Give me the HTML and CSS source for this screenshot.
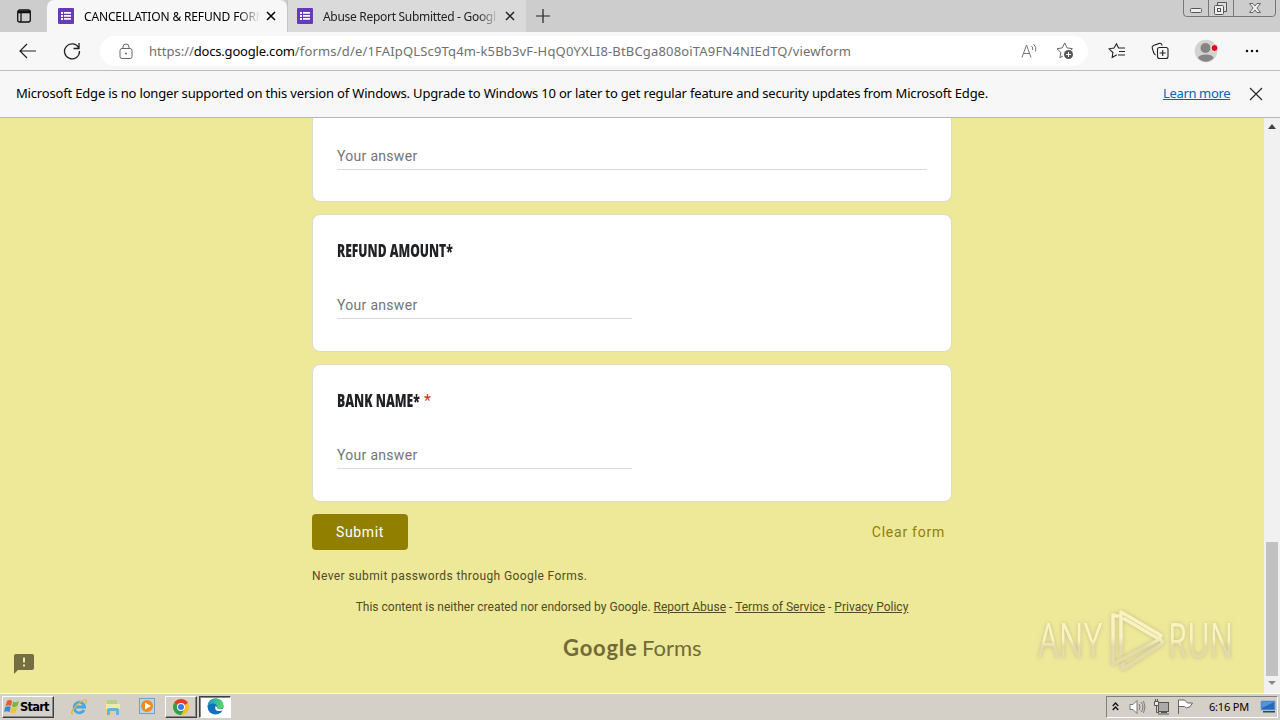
FILE: index.html
```html
<!DOCTYPE html>
<html lang="en">
<head>
<meta charset="utf-8">
<title>CANCELLATION &amp; REFUND FORM</title>
<link rel="stylesheet" href="styles.css">
</head>
<body>
<svg width="0" height="0" class="defs">
  <symbol id="forms" viewBox="0 0 16 16"><rect width="16" height="16" rx="1" fill="#673ab7"/><path d="M3 4h2v2H3zM3 7h2v2H3zM3 10h2v2H3zM6 4h7v1.7H6zM6 7h7v1.7H6zM6 10h7v1.7H6z" fill="#fff"/></symbol>
  <symbol id="cross" viewBox="0 0 10 10"><path d="M1 1l8 8M9 1L1 9" fill="none" stroke="currentColor"/></symbol>
</svg>
<div class="screen">
  <header class="tabs">
    <div class="tab-menu"><svg width="16" height="16" viewBox="0 0 16 16" fill="none" stroke="#111" stroke-width="1.3"><rect x="1.7" y="2" width="12.6" height="12" rx="2"/><path d="M2 4h12" stroke-width="2.6"/><path d="M5 5v9"/></svg></div>
    <div class="tab active"><svg class="fav"><use href="#forms"/></svg><span class="tab-title t1">CANCELLATION &amp; REFUND FORM</span><svg class="tab-x"><use href="#cross"/></svg></div>
    <div class="tab second"><svg class="fav"><use href="#forms"/></svg><span class="tab-title t2">Abuse Report Submitted - Googl</span><svg class="tab-x"><use href="#cross"/></svg></div>
    <svg class="plus" width="16" height="16" viewBox="0 0 16 16"><path d="M8 1v14M1 8h14" stroke="#222" stroke-width="1.2"/></svg>
    <svg class="winctl" width="94" height="18" viewBox="0 0 94 18" fill="none" stroke="#777"><path d="M.5 0v13q0 3.500 3 3.500h86q3 0 3-3.500V0M25.500 0v16M50.500 0v16"/><rect x="7.500" y="8.500" width="11" height="4" rx="1" fill="#eee" stroke="#555"/><path d="M34.500 5V2.500h9v9H41" fill="#ddd" stroke="#555"/><rect x="31.500" y="5.500" width="9" height="9" rx="1" fill="#eee" stroke="#555"/><rect x="34.500" y="8.500" width="3" height="3" stroke="#555"/><path d="M66.500 3.500h3.500l2 2.500 2-2.500h3.500l-3.500 4.500 3.500 4.500h-3.500l-2-2.500-2 2.500h-3.500l3.500-4.500z" fill="#eee" stroke="#666"/></svg>
  </header>
  <div class="toolbar">
    <svg class="back" width="18" height="16" viewBox="0 0 18 16" fill="none" stroke="#222" stroke-width="1.2"><path d="M17 8H1.500M8 1L1 8l7 7"/></svg>
    <svg class="reload" width="18" height="18" viewBox="0 0 18 18" fill="none" stroke="#222" stroke-width="1.300"><path d="M15.800 6.200A7.500 7.500 0 1 0 16.500 9M16 1v5.500h-5.500"/></svg>
    <div class="address">
      <svg class="lock" width="14" height="17" viewBox="0 0 14 17" fill="none" stroke="#666"><rect x="1" y="5.500" width="12" height="10" rx="2"/><path d="M4 5.500V4a3 3 0 0 1 6 0v1.500"/><circle cx="7" cy="10.500" r="1" fill="#666" stroke="none"/></svg>
      <span class="url">https://<b>docs.google.com</b><i>/forms/d/e/1FAIpQLSc9Tq4m-k5Bb3vF-HqQ0YXLI8-BtBCga808oiTA9FN4NIEdTQ/viewform</i></span>
      <svg class="read" width="17" height="16" viewBox="0 0 17 16" fill="none" stroke="#777"><path d="M1 14.500L5.500 2 10 14.500M2.500 10.500h6M10.500 3q2 2 1 4M12.500 1q3.500 3 2 7.500"/></svg>
      <svg class="addfav" width="18" height="18" viewBox="0 0 18 18" fill="none" stroke="#666"><path d="M7 14l-3.100 1.700.9-5.300L1 6.700l5.300-.8L8.700 1l2.400 4.900 5.300.8-2 2"/><circle cx="12.500" cy="12.500" r="4.500" fill="#555" stroke="none"/><path d="M12.500 10v5M10 12.500h5" stroke="#fff"/></svg>
    </div>
    <svg class="favs" width="18" height="16" viewBox="0 0 18 16" fill="none" stroke="#222" stroke-width="1.100"><path d="M8.800 11.700L4.200 14.500l.7-5L1 5.800l5-.8L8.500 .8l2 4.200H17M11 8.500h6M10 12h7"/></svg>
    <svg class="coll" width="18" height="18" viewBox="0 0 18 18" fill="none" stroke="#222" stroke-width="1.100"><path d="M4.500 13Q3 12 2.600 10.500L1.200 5.800Q.8 4 2.500 3.400L8.400 1.400q1.600-.4 2.300 1l.4 1.200"/><rect x="6.500" y="5.500" width="10.500" height="11" rx="2"/><path d="M11.700 8v6M8.700 11h6"/></svg>
    <svg class="avatar" width="24" height="24" viewBox="0 0 24 24"><circle cx="12" cy="12" r="11.300" fill="#d2d2cf"/><circle cx="11.500" cy="9" r="5" fill="#858585"/><path d="M4 19q1-3.500 8-3.500t7.500 3.500q-7.500 7.500-15.500 0z" fill="#858585"/><circle cx="20.500" cy="9" r="3.500" fill="#e30b1d" stroke="#eee"/></svg>
    <svg class="dots" width="14" height="4" viewBox="0 0 14 4" fill="#111"><circle cx="2" cy="2" r="1.250"/><circle cx="7" cy="2" r="1.250"/><circle cx="12" cy="2" r="1.250"/></svg>
  </div>
  <div class="infobar"><span class="notice">Microsoft Edge is no longer supported on this version of Windows. Upgrade to Windows 10 or later to get regular feature and security updates from Microsoft Edge.</span><a class="learn">Learn more</a><svg class="info-x" viewBox="0 0 14 14"><path d="M1 1l12 12M13 1L1 13" stroke="#222" stroke-width="1.100"/></svg></div>
  <div class="viewport">
    <main class="page">
      <form class="form">
        <section class="card clipped"><div class="answer wide"><span>Your answer</span></div></section>
        <section class="card"><h2><span class="q q1">REFUND AMOUNT*</span></h2><div class="answer"><span>Your answer</span></div></section>
        <section class="card"><h2><span class="q q2">BANK NAME*</span><em>*</em></h2><div class="answer"><span>Your answer</span></div></section>
        <div class="actions"><button type="button" class="submit">Submit</button><span class="clear">Clear form</span></div>
        <p class="never">Never submit passwords through Google Forms.</p>
        <p class="legal">This content is neither created nor endorsed by Google. <u>Report Abuse</u> - <u>Terms of Service</u> - <u>Privacy Policy</u></p>
        <div class="brand"><span class="goog">Google</span><span class="frm">Forms</span></div>
      </form>
      <svg class="feedback" width="20" height="20" viewBox="0 0 20 20"><path d="M2 0h16a2 2 0 0 1 2 2v12a2 2 0 0 1-2 2H4l-4 4V2a2 2 0 0 1 2-2z" fill="#746e42"/><path d="M9 3.500h2v5H9zM9 10.500h2v2H9z" fill="#eee899"/></svg>
      <div class="watermark"><span class="any">ANY</span><svg width="58" height="64" viewBox="0 0 58 64" fill="none" stroke="url(#wm)" stroke-width="3.500" stroke-linejoin="round"><defs><linearGradient id="wm" gradientUnits="userSpaceOnUse" x1="0" y1="0" x2="0" y2="64"><stop offset=".45" stop-color="#faf5c6"/><stop offset=".6" stop-color="#e2daae"/></linearGradient></defs><path d="M9 8.500L3 7v49L51 30.500M11 47V4l40 23.500-2 3.500L13 10M15 55l-3 2 1 4 38-24.500q3-3-1-5"/></svg><span class="run">RUN</span></div>
    </main>
    <div class="scroll"><svg width="8" height="5"><path d="M0 5L4 0l4 5z" fill="#444"/></svg><div class="thumb"></div><svg width="8" height="5"><path d="M0 0h8L4 4z" fill="#8a8a8a"/></svg></div>
  </div>
  <footer class="taskbar">
    <div class="start"><svg width="16" height="16" viewBox="0 0 16 16"><path d="M3 2q3-2 5 0L7 7Q4 5.500 1.500 7z" fill="#e8592b"/><path d="M9 2.500q3 1.500 6-.5l-1.500 5q-3 2-5.500.5z" fill="#74b844"/><path d="M1.300 8q3-1.500 5.500 0l-1.300 5q-3-1.500-5.500 0z" fill="#3d85cc"/><path d="M7.700 8.500q3 1.500 5.700-.5l-1.500 5q-3 2-5.500.5z" fill="#f3c22d"/></svg><span>Start</span></div>
    <svg class="ie" width="18" height="18" viewBox="0 0 18 18" fill="none"><path d="M14 12A5.300 5.300 0 1 1 14.600 9H5" stroke="#45a8e0" stroke-width="2.800"/><path d="M3 16q-4-1 3-8 7-7 10-6 1 1-.5 3.500" stroke="#e5b53d" stroke-width="1.300"/></svg>
    <svg class="folder" width="18" height="18" viewBox="0 0 18 18"><path d="M1 3h6l1 2h8v11H1z" fill="#e8d37a"/><path d="M3 2h10v4H3z" fill="#b8cf8b"/><path d="M2 6h14v5H2z" fill="#f5e8a2"/><path d="M3 17v-5q0-2 2-2h8q2 0 2 2v5h-3v-4H6v4z" fill="#61b4dc"/></svg>
    <svg class="media" width="17" height="17" viewBox="0 0 17 17"><rect x=".5" y=".5" width="15" height="15" fill="#b7d7ed" stroke="#6d9fc8"/><circle cx="8" cy="8" r="6" fill="#f28a18"/><path d="M6 4.500l6 3.500-6 3.500z" fill="#fff"/></svg>
    <div class="task chrome"><svg width="16" height="16" viewBox="0 0 16 16"><circle cx="8" cy="8" r="8" fill="#fbc116"/><path d="M8 8L1.100 4A8 8 0 0 1 14.900 4z" fill="#e33b2e"/><path d="M1.100 4A8 8 0 0 0 8 16l3.500-6L8 8z" fill="#2da14c"/><circle cx="8" cy="8" r="4" fill="#fff"/><circle cx="8" cy="8" r="3" fill="#3b78e7"/></svg></div>
    <div class="task edge"><svg width="17" height="17" viewBox="0 0 17 17"><defs><linearGradient id="eg" x1="0" y1="0" x2="1" y2=".2"><stop stop-color="#1695d2"/><stop offset="1" stop-color="#5bd46b"/></linearGradient></defs><circle cx="8.500" cy="8.500" r="8" fill="#1270bd"/><path d="M.5 9Q1 .5 8.500.5q7.500 0 8 6.500 0 4-4 4-3 0-2.500-2Q10 5.500 6 5.500 1.500 5.500.5 9z" fill="url(#eg)"/><path d="M8.500 8q-1.500 5 3.500 5 2.500 0 4.500-1l.5-2q-2 1.500-4.500 1.200Q9.500 11 10 9z" fill="#fff"/></svg></div>
    <div class="tray">
      <svg width="7" height="9" viewBox="0 0 7 9" fill="none" stroke="#111" stroke-width="1.300"><path d="M.7 4l2.800-3 2.800 3M.7 8l2.800-3 2.800 3"/></svg>
      <svg class="snd" width="17" height="16" viewBox="0 0 17 16" fill="none" stroke="#777"><path d="M1 5.500h3l4-4v13l-4-4H1z" fill="#fff"/><path d="M10 5q2 3 0 6M12 3q4 5 0 10M14.500 2q3 6 0 12"/></svg>
      <svg class="net" width="17" height="16" viewBox="0 0 17 16" fill="none" stroke="#555"><rect x="5.500" y="3.500" width="10" height="9" fill="#aaa"/><path d="M5 15h11M8 13.500h6" stroke="#555"/><path d="M1.500 2.500h4v4h-4z" fill="#eee"/><path d="M2.500 0v2M4.500 0v2M3.500 7v6.500H6"/></svg>
      <svg class="flag" width="17" height="15" viewBox="0 0 17 15" fill="#fff" stroke="#666"><path d="M1.500 15V1h6q2 2 3 3h5q-2 5-6 5l-2-1.500h-6"/></svg>
      <span class="clock">6:16 PM</span>
      <svg class="desk" width="16" height="13" viewBox="0 0 16 13"><path d="M1 1h14v9H1z" fill="#2369bd" stroke="#7eaad5"/><path d="M2 2h12L2 8z" fill="#5593d8"/><path d="M3 11h12v1.500H3z" fill="#28496b"/></svg>
    </div>
  </footer>
</div>
</body>
</html>
```

FILE: styles.css
```css
* { box-sizing: border-box; }
body { margin: 0; font-family: "Noto Sans", sans-serif; }
svg { display: block; flex: none; }
.defs { position: absolute; }
.screen { width: 1280px; height: 720px; overflow: hidden; display: flex; flex-direction: column; }
.tabs { height: 32px; flex: none; background: #cdcdcd; display: flex; font-size: 12px; color: #222; }
.tab-menu { width: 47px; padding: 8px 0 0 16px; }
.tab { display: flex; align-items: center; width: 240px; height: 32px; padding-left: 11px; }
.tab.active { background: #f7f7f7; border-radius: 7px 7px 0 0; color: #000; }
.tab.second { width: 239px; background: #dadada; border-left: 1px solid #c4c4c4; padding-left: 9px; }
.fav { width: 16px; height: 16px; margin-right: 10px; }
.tab-title { width: 176px; overflow: hidden; white-space: nowrap; -webkit-mask-image: linear-gradient(90deg, #000 88%, transparent); mask-image: linear-gradient(90deg, #000 88%, transparent); }
.t1 { letter-spacing: -.15px; }
.t2 { letter-spacing: -.3px; }
.tab-x { width: 10px; height: 10px; margin-left: 6px; stroke-width: 1.5; }
.plus { margin: 8px 0 0 9px; }
.winctl { margin: 0 3px 0 auto; }
.toolbar { height: 39px; flex: none; background: #f7f7f7; border-bottom: 1px solid #bcbcbc; display: flex; align-items: center; }
.back { margin-left: 19px; }
.reload { margin-left: 26px; }
.address { width: 988px; height: 30px; margin-left: 19px; border-radius: 15px; background: #fff; display: flex; align-items: center; padding-left: 19px; }
.url { width: 872px; margin-left: 16px; color: #707070; font-size: 13px; white-space: nowrap; }
.url b { font-weight: 400; color: #000; letter-spacing: -.2px; }
.url i { font-style: normal; letter-spacing: .17px; }
.addfav { margin-left: 18px; }
.favs { margin-left: 20px; }
.coll { margin-left: 25px; }
.avatar { margin-left: 25px; }
.dots { margin-left: 27px; }
.infobar { height: 47px; flex: none; background: #f7f7f7; border-bottom: 1px solid #b8b8b8; display: flex; align-items: center; padding: 0 0 0 16px; font-size: 13px; color: #000; }
.notice { width: 1147px; padding-bottom: 2px; white-space: nowrap; letter-spacing: -.175px; }
.learn { width: 68px; padding-bottom: 2px; color: #0067b8; text-decoration: underline; white-space: nowrap; letter-spacing: -.35px; }
.info-x { width: 14px; height: 14px; margin-left: 18px; }
.viewport { height: 575px; flex: none; display: flex; }
.page { position: relative; width: 1264px; background: #eee899; font-family: Roboto, sans-serif; overflow: hidden; }
.form { width: 640px; margin-left: 312px; }
.card { height: 138px; margin-bottom: 12px; background: #fff; border: 1px solid #dddcc8; border-radius: 8px; padding: 24px 24px 0; }
.clipped { height: 84px; border-top: 0; border-radius: 0 0 8px 8px; padding-top: 27px; }
h2 { height: 24px; margin: 0 0 31px; display: flex; font: 800 16px/24px "Open Sans", sans-serif; color: #202124; }
.q { display: block; height: 24px; transform-origin: 0 50%; white-space: nowrap; }
.q1 { width: 116px; transform: scale(.757, 1.06); }
.q2 { width: 87px; transform: scale(.762, 1.06); }
h2 em { font: 400 16px/24px Roboto, sans-serif; color: #d93025; }
.answer { width: 295px; height: 25px; border-bottom: 1px solid #dadada; font-size: 14px; line-height: 22px; letter-spacing: .3px; color: #70757a; }
.wide { width: 590px; }
.actions { height: 36px; display: flex; justify-content: space-between; align-items: center; }
.submit { width: 96px; height: 36px; padding: 0; border: 0; border-radius: 4px; background: #917f00; color: #fff; font: 400 14px Roboto, sans-serif; letter-spacing: .6px; }
.clear { margin-right: 7px; color: #917f00; font-size: 14px; font-weight: 400; letter-spacing: .75px; }
.never, .legal { margin: 0; font-size: 12px; line-height: 16px; color: #504c24; white-space: nowrap; }
.never { padding-top: 18px; letter-spacing: .4px; }
.legal { padding-top: 15px; text-align: center; letter-spacing: .01px; }
.brand { display: flex; height: 30px; margin: 18px 0 0 251px; color: #716b38; font: 22px/30px "Lato", sans-serif; }
.goog { width: 79px; font-weight: 700; letter-spacing: .8px; }
.feedback { position: absolute; left: 14px; top: 536px; }
.watermark { position: absolute; left: 1038px; top: 490px; display: flex; align-items: center; height: 64px; font: 50px/62px "Open Sans", sans-serif; opacity: .9; filter: drop-shadow(0 0 2px #bdb684); }
.watermark span { display: block; width: 64px; height: 64px; transform-origin: 0 50%; color: transparent; background: linear-gradient(#faf5c6 50%, #e2daae 60%); background-clip: text; -webkit-background-clip: text; }
.watermark svg { margin: 0 0 0 8px; }
.watermark .any { width: 100px; margin-right: -36px; transform: scaleX(.66); }
.watermark .run { width: 105px; margin-right: -41px; transform: scaleX(.62); }
.scroll { width: 16px; background: #f1f1f1; display: flex; flex-direction: column; align-items: center; padding: 6px 0; }
.thumb { width: 12px; height: 134px; background: #c1c1c1; margin: 413px 0 5px; }
.taskbar { height: 27px; flex: none; background: #d4d0c8; box-shadow: inset 0 1px #fff; display: flex; align-items: center; padding: 2px 2px 2px; }
.start, .task { height: 22px; display: flex; align-items: center; border: 1px solid; border-color: #fff #404040 #404040 #fff; box-shadow: inset -1px -1px #888; }
.start { width: 52px; padding-left: 1px; font: 700 11.500px "DejaVu Sans", sans-serif; color: #000; }
.start span { letter-spacing: -.8px; }
.ie { margin-left: 16px; }
.folder { margin-left: 16px; }
.media { margin-left: 17px; }
.task { width: 32px; justify-content: center; }
.chrome { margin-left: 9px; }
.edge { margin-left: 2px; background: #fff; border-color: #404040 #fff #fff #404040; box-shadow: inset 1px 1px #888; }
.tray { width: 172px; height: 22px; margin-left: auto; display: flex; align-items: center; border: 1px solid; border-color: #808080 #fff #fff #808080; padding-left: 5px; }
.snd { margin-left: 10px; }
.net { margin-left: 7px; }
.flag { margin-left: 7px; }
.clock { width: 40px; margin-left: 15px; font-size: 11px; letter-spacing: -.2px; white-space: nowrap; color: #000; }
.desk { margin-left: 11px; }
```
